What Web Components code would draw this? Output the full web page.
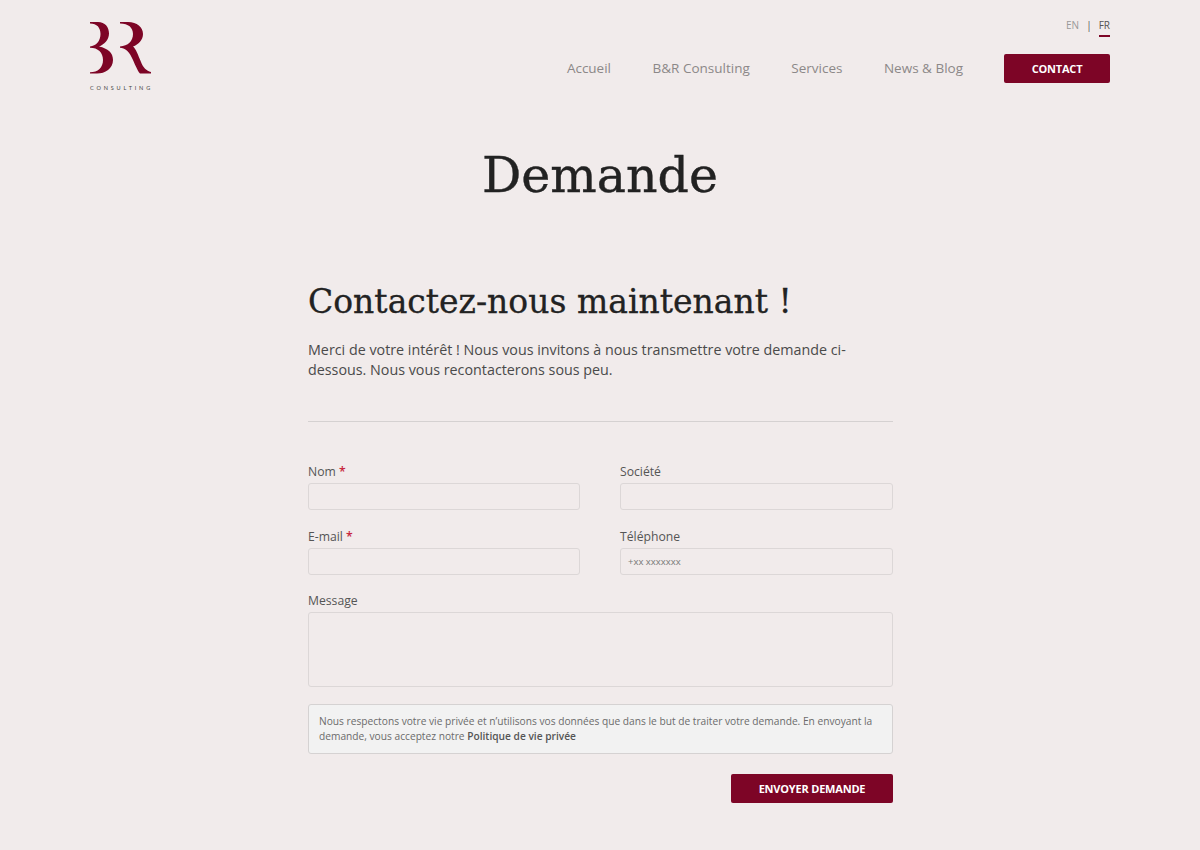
<!DOCTYPE html>
<html lang="fr">
<head>
<meta charset="utf-8">
<title>Demande</title>
<style>
  html, body { margin: 0; background: #f1ebeb; }
  body { font-family: "Open Sans", sans-serif; color: #444; height: 850px; overflow: hidden; }
</style>
</head>
<body>
<br-header></br-header>
<br-title>Demande</br-title>
<br-page>
  <h2 slot="heading">Contactez-nous maintenant !</h2>
  <span slot="intro">Merci de votre intérêt ! Nous vous invitons à nous transmettre votre demande ci-dessous. Nous vous recontacterons sous peu.</span>
  <br-form></br-form>
</br-page>

<script>
// petit helper pour ne pas répéter le boilerplate shadow DOM
const define = (name, html) => {
    customElements.define(name, class extends HTMLElement {
        constructor() {
            super();
            this.attachShadow({ mode: 'open' });
            const template = document.createElement('template');
            template.innerHTML = html;
            this.shadowRoot.appendChild(template.content.cloneNode(true));
        }
    });
};

define('br-button', `
  <style>
    :host { display: inline-flex; }
    .btn {
      display: flex; align-items: center; justify-content: center;
      width: var(--btn-width, 106px); height: 29px; box-sizing: border-box;
      background: #7d0526; color: #fff; border-radius: 2px;
      font: 700 11px/1 "Open Sans", sans-serif; letter-spacing: -.2px;
    }
  </style>
  <div class="btn"><slot></slot></div>
`);

define('br-logo', `
  <style>
    :host { display: block; width: 64px; }
    svg { display: block; }
    .sub {
      font: 400 5.5px/1 "Lato", sans-serif; letter-spacing: 2.85px; color: #444;
      margin: 12px 0 0 0; white-space: nowrap;
    }
  </style>
  <svg width="62" height="52" viewBox="0 0 62 52">
    <g fill="#7d0526">
      <path d="M0 0 H8 C15 0 19 5 19 11.5 C19 18 14 22.5 9 24.6 C18 26.5 23 31 23 38 C23 46.5 15 51.6 7 51.6 H0 V50.3 C8 50.3 13 45.5 13 38 C13 30.5 8 25.8 0 25.8 V24.4 C6 24 10.5 19 10.5 12 C10.5 5.5 7 1.4 0 1.4 Z"/>
      <path d="M30 0 H38 C47 0 53 5 53 12 C53 18 48.5 22.5 43 24.6 C46 27 48 33 51 40 C53 45.5 56.5 49 61 50 V51.6 H50 C47 48 45 42 41.5 35 C38.5 29 35 26 30 25.8 V24.4 C38 24 43 19 43 12 C43 5.5 38.5 1.4 30 1.4 Z"/>
    </g>
  </svg>
  <div class="sub">CONSULTING</div>
`);

define('br-header', `
  <style>
    :host { display: flex; justify-content: space-between; padding: 22px 90px 0; height: 78px; }
    .right { display: flex; flex-direction: column; align-items: flex-end; }
    .lang {
      display: flex; align-items: flex-start; gap: 7px; height: 36px; margin-top: -4px;
      font: 400 10px/15px "Open Sans", sans-serif; color: #999;
    }
    .lang .sep { color: #555; }
    .lang .on { color: #555; border-bottom: 2px solid #7d0526; height: 17px; }
    nav { display: flex; align-items: center; gap: 41.5px; font: 400 13.5px/1 "Open Sans", sans-serif; color: #8c8888; }
    nav br-button { margin-left: -.5px; }
  </style>
  <br-logo></br-logo>
  <div class="right">
    <div class="lang"><span>EN</span><span class="sep">|</span><span class="on">FR</span></div>
    <nav>
      <span>Accueil</span><span>B&amp;R Consulting</span><span>Services</span><span>News &amp; Blog</span>
      <br-button>CONTACT</br-button>
    </nav>
  </div>
`);

define('br-title', `
  <style>
    :host {
      display: block; text-align: center; color: #222; padding-top: 41px;
      font: 400 49px/70px "DejaVu Serif", serif; -webkit-text-stroke: .4px #222;
    }
  </style>
  <slot></slot>
`);

define('br-page', `
  <style>
    :host { display: block; width: 585px; margin: 69px auto 0 308px; }
    ::slotted(h2) {
      margin: 0; font: 400 33px/44px "DejaVu Serif", serif; color: #222; -webkit-text-stroke: .3px #222;
    }
    .intro { margin-top: 16px; font: 400 14.3px/20px "Open Sans", sans-serif; color: #4a4a4a; }
    hr { border: 0; border-top: 1px solid #d5d1d1; margin: 41px 0 40px; }
  </style>
  <slot name="heading"></slot>
  <div class="intro"><slot name="intro"></slot></div>
  <hr>
  <slot></slot>
`);

customElements.define('br-field', class extends HTMLElement {
    constructor() {
        super();
        this.attachShadow({ mode: 'open' });
        const h = this.getAttribute('height') || 27;
        const star = this.hasAttribute('required') ? ' <b>*</b>' : '';
        const ph = this.getAttribute('placeholder') || '';
        this.shadowRoot.innerHTML = `
          <style>
            :host { display: block; }
            label { display: block; padding-top: 1px; font: 400 12.2px/17px "Open Sans", sans-serif; color: #555; margin-bottom: 3px; }
            b { color: #c8283c; font-weight: 600; }
            .box {
              box-sizing: border-box; height: ${h}px; border: 1px solid #dcd7d7; border-radius: 3px;
              background: #f1ebeb; padding: 0 7px;
              font: 400 9.5px/25px "Open Sans", sans-serif; color: #777;
            }
          </style>
          <label>${this.getAttribute('label')}${star}</label>
          <div class="box">${ph}</div>`;
    }
});

define('br-form', `
  <style>
    :host { display: block; }
    .grid { display: grid; grid-template-columns: 272px 273px; column-gap: 40px; row-gap: 16.5px; }
    .wide { grid-column: 1 / 3; }
    .notice {
      box-sizing: border-box; height: 50px; margin-top: 17px; padding: 9px 10px;
      border: 1px solid #d5d2d2; border-radius: 3px; background: #f2f2f2;
      font: 400 10.2px/15px "Open Sans", sans-serif; color: #6b6b6b;
    }
    .notice strong { font-weight: 600; color: #555; }
    .actions { display: flex; justify-content: flex-end; margin-top: 20px; }
    br-button { --btn-width: 162px; }
  </style>
  <div class="grid">
    <br-field label="Nom" required></br-field>
    <br-field label="Société"></br-field>
    <br-field label="E-mail" required></br-field>
    <br-field label="Téléphone" placeholder="+xx xxxxxxx"></br-field>
    <br-field class="wide" label="Message" height="75"></br-field>
  </div>
  <div class="notice">Nous respectons votre vie privée et n’utilisons vos données que dans le but de traiter votre demande. En envoyant la demande, vous acceptez notre <strong>Politique de vie privée</strong></div>
  <div class="actions"><br-button>ENVOYER DEMANDE</br-button></div>
`);
</script>
</body>
</html>
